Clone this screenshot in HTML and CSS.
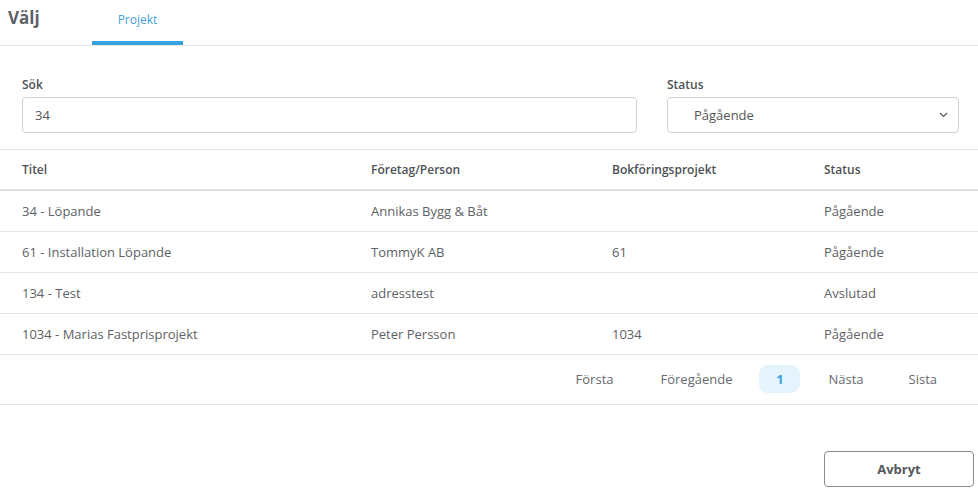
FILE: index.html
```html
<!DOCTYPE html>
<html lang="sv">
<head>
<meta charset="utf-8">
<link rel="stylesheet" href="styles.css">
</head>
<body>
<div class="page">
  <header class="tabs">
    <h1 class="title">Välj</h1>
    <div class="tab active">Projekt</div>
  </header>
  <section class="filters">
    <label class="field search">
      <span class="label">Sök</span>
      <span class="input">34</span>
    </label>
    <label class="field status">
      <span class="label">Status</span>
      <span class="input select">Pågående
        <svg class="chev" width="9" height="6" viewBox="0 0 9 6"><path d="M1 1l3.5 3.5L8 1" fill="none" stroke="#555" stroke-width="1.2"/></svg>
      </span>
    </label>
  </section>
  <table class="grid">
    <thead>
      <tr><th class="c1">Titel</th><th class="c2">Företag/Person</th><th class="c3">Bokföringsprojekt</th><th class="c4">Status</th></tr>
    </thead>
    <tbody>
      <tr><td>34 - Löpande</td><td>Annikas Bygg &amp; Båt</td><td></td><td>Pågående</td></tr>
      <tr><td>61 - Installation Löpande</td><td>TommyK AB</td><td>61</td><td>Pågående</td></tr>
      <tr><td>134 - Test</td><td>adresstest</td><td></td><td>Avslutad</td></tr>
      <tr><td>1034 - Marias Fastprisprojekt</td><td>Peter Persson</td><td>1034</td><td>Pågående</td></tr>
    </tbody>
  </table>
  <nav class="pager">
    <span class="pg first">Första</span>
    <span class="pg prev">Föregående</span>
    <span class="pg current">1</span>
    <span class="pg next">Nästa</span>
    <span class="pg last">Sista</span>
  </nav>
  <footer class="actions">
    <button class="btn">Avbryt</button>
  </footer>
</div>
</body>
</html>
```
FILE: styles.css
```css
* { box-sizing: border-box; }
html, body { margin: 0; padding: 0; background: #fff; }
body { font-family: "Open Sans", "Liberation Sans", sans-serif; color: #5b5f63; font-size: 13px; }
.page { width: 978px; }
.tabs { display: flex; align-items: stretch; height: 46px; border-bottom: 1px solid #e6e6e6; }
.title { margin: 0; font-size: 17px; font-weight: 700; color: #5d6165; padding: 7px 0 0 8px; width: 92px; line-height: 22px; }
.tab { width: 91px; text-align: center; font-size: 12px; color: #3fa1e0; padding-top: 11px; border-bottom: 4px solid #36a3df; }
.filters { display: flex; padding: 31px 19px 16px 22px; gap: 30px; border-bottom: 1px solid #e1e4e8; }
.field { display: flex; flex-direction: column; }
.search { width: 615px; }
.status { width: 292px; }
.label { font-size: 12px; font-weight: 600; color: #4d5155; line-height: 16px; margin-bottom: 4px; }
.input { display: flex; align-items: center; height: 36px; border: 1px solid #cfd3d7; border-radius: 4px; padding: 0 12px; font-size: 13px; color: #555; }
.select { padding-left: 26px; justify-content: space-between; padding-right: 10px; }
.grid { width: 100%; border-collapse: collapse; }
.grid th { text-align: left; font-size: 12px; font-weight: 600; color: #4d5155; height: 40px; border-bottom: 2px solid #dde1e6; padding: 0; }
.grid td { height: 41px; border-bottom: 1px solid #e4e6e9; padding: 0; font-size: 13px; color: #5e6266; }
.grid th:first-child, .grid td:first-child { padding-left: 22px; width: 371px; }
.c2 { width: 241px; }
.c3 { width: 212px; }
.pager { display: flex; justify-content: flex-end; align-items: center; height: 50px; border-bottom: 1px solid #e1e4e8; padding-right: 41px; }
.pg { font-size: 13px; color: #666a6e; }
.prev { margin-left: 47px; }
.current { margin-left: 27px; background: #e5f3fc; color: #3b9fe0; font-weight: 700; border-radius: 9px; width: 41px; height: 28px; display: flex; align-items: center; justify-content: center; }
.next { margin-left: 28px; }
.last { margin-left: 45px; }
.actions { display: flex; justify-content: flex-end; padding: 46px 4px 0 0; }
.btn { width: 150px; height: 36px; border: 1px solid #8a8d90; border-radius: 4px; background: #fff; font-family: inherit; font-size: 13px; font-weight: 700; color: #54585c; }
```
